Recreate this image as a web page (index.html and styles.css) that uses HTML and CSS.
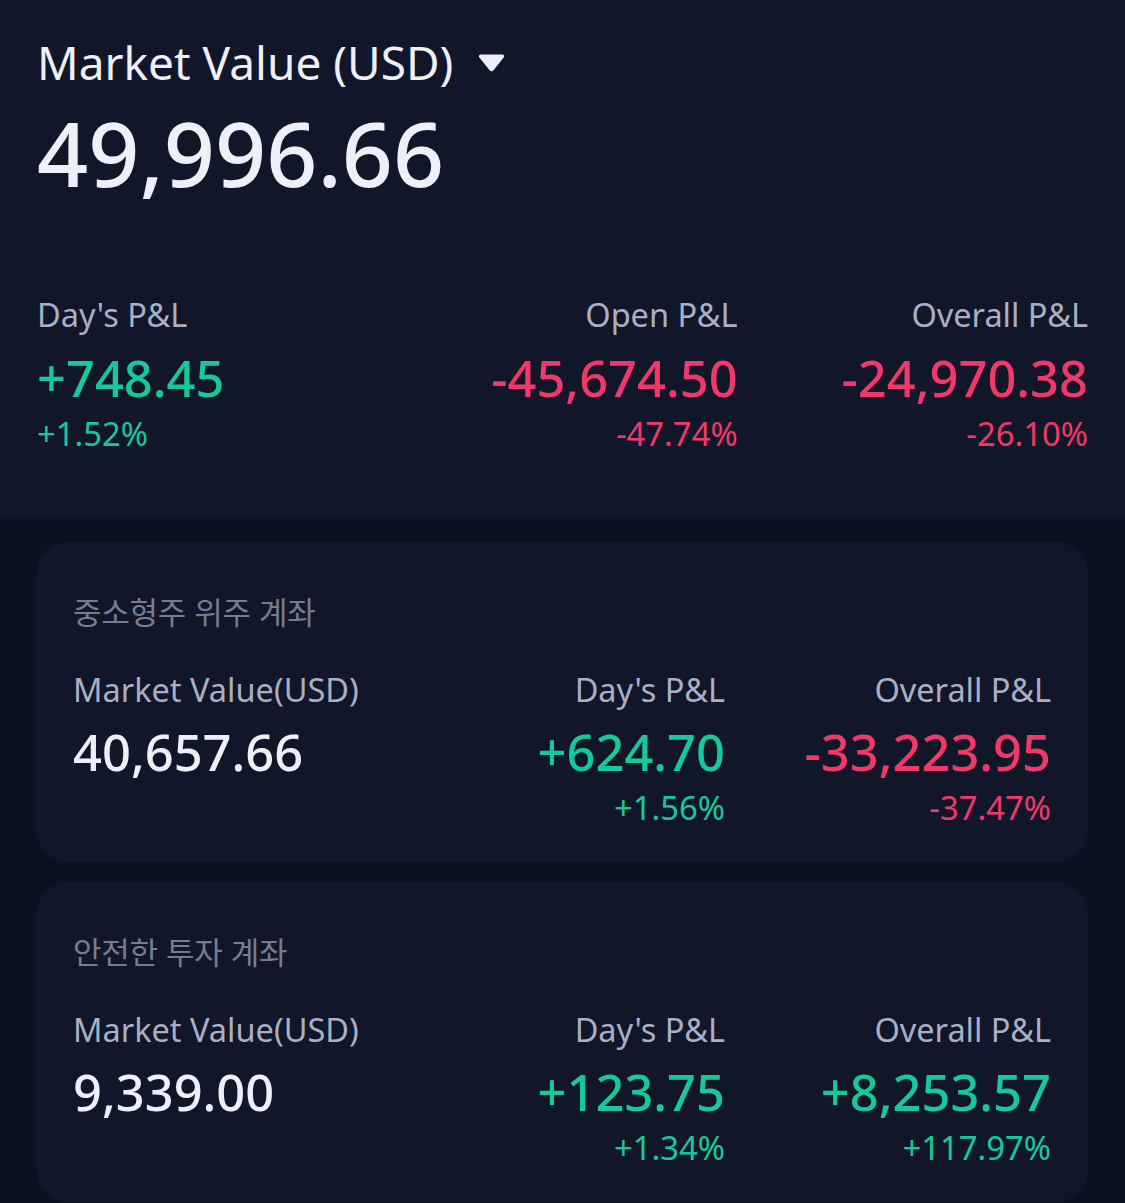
FILE: index.html
```html
<!DOCTYPE html>
<html lang="ko">
<head>
    <meta charset="UTF-8">
    <title>Market Value</title>
    <link rel="stylesheet" href="styles.css">
</head>
<body>
<div class="summary">
    <div class="title">
        <span>Market Value (USD)</span>
        <svg class="caret" width="27" height="19" viewBox="0 0 27 19">
            <path d="M3 1.5h21c2 0 2.8 1.6 1.7 3.1l-10.4 13c-.9 1.1-2.6 1.1-3.5 0L1.4 4.6C.2 3.1 1 1.5 3 1.5z" fill="#eef0f8"/>
        </svg>
    </div>
    <div class="total">49,996.66</div>
    <div class="stats">
        <div class="stat">
            <div class="label">Day's P&amp;L</div>
            <div class="value up">+748.45</div>
            <div class="pct up">+1.52%</div>
        </div>
        <div class="stat right">
            <div class="label">Open P&amp;L</div>
            <div class="value down">-45,674.50</div>
            <div class="pct down">-47.74%</div>
        </div>
        <div class="stat right">
            <div class="label">Overall P&amp;L</div>
            <div class="value down">-24,970.38</div>
            <div class="pct down">-26.10%</div>
        </div>
    </div>
</div>

<div class="accounts">
    <div class="card">
        <div class="card-name">중소형주 위주 계좌</div>
        <div class="stats">
            <div class="stat">
                <div class="label">Market Value(USD)</div>
                <div class="value">40,657.66</div>
            </div>
            <div class="stat right">
                <div class="label">Day's P&amp;L</div>
                <div class="value up">+624.70</div>
                <div class="pct up">+1.56%</div>
            </div>
            <div class="stat right">
                <div class="label">Overall P&amp;L</div>
                <div class="value down">-33,223.95</div>
                <div class="pct down">-37.47%</div>
            </div>
        </div>
    </div>
    <div class="card">
        <div class="card-name">안전한 투자 계좌</div>
        <div class="stats">
            <div class="stat">
                <div class="label">Market Value(USD)</div>
                <div class="value">9,339.00</div>
            </div>
            <div class="stat right">
                <div class="label">Day's P&amp;L</div>
                <div class="value up">+123.75</div>
                <div class="pct up">+1.34%</div>
            </div>
            <div class="stat right">
                <div class="label">Overall P&amp;L</div>
                <div class="value up">+8,253.57</div>
                <div class="pct up">+117.97%</div>
            </div>
        </div>
    </div>
</div>
</body>
</html>
```

FILE: styles.css
```css
*{
    padding: 0;
    margin: 0;
    box-sizing: border-box;
}
body{
    background-color: #0c111f;
    color: #eef0f8;
    font-family: "Noto Sans", "Open Sans", "Noto Sans CJK KR", sans-serif;
    height: 1203px;
    overflow: hidden;
}
.summary{
    height: 517px;
    padding: 31px 37px 0;
    background-color: #111729;
}
.title{
    display: flex;
    align-items: center;
    gap: 25px;
    font-size: 46px;
    line-height: 62px;
}
.caret{
    display: block;
    margin-top: 1px;
}
.total{
    margin-top: 9px;
    font-size: 89.5px;
    font-weight: 500;
    line-height: 100px;
}
.summary .stats{
    margin-top: 93px;
}
.stats{
    display: grid;
    grid-template-columns: 1fr 1fr 1fr;
}
.stat{
    display: flex;
    flex-direction: column;
    align-items: flex-start;
}
.stat.right{
    align-items: flex-end;
}
.label{
    font-size: 32.5px;
    line-height: 40px;
    color: #a9b0c4;
}
.value{
    margin-top: 15px;
    font-size: 50.6px;
    font-weight: 500;
    line-height: 56px;
}
.pct{
    margin-top: 8px;
    font-size: 32.8px;
    line-height: 40px;
}
.up{
    color: #16c99d;
}
.down{
    color: #f1386b;
}
.accounts{
    display: flex;
    flex-direction: column;
    gap: 20px;
    padding: 25px 37px 0 36px;
}
.card{
    height: 320px;
    padding: 49px 37px 0;
    border-radius: 32px;
    background-color: #111729;
}
.card-name{
    font-family: "Noto Sans CJK KR", sans-serif;
    font-size: 31px;
    line-height: 40px;
    letter-spacing: -0.3px;
    color: #767d91;
}
.card .stats{
    margin-top: 39px;
}
.card .value{
    margin-top: 14px;
}
```
